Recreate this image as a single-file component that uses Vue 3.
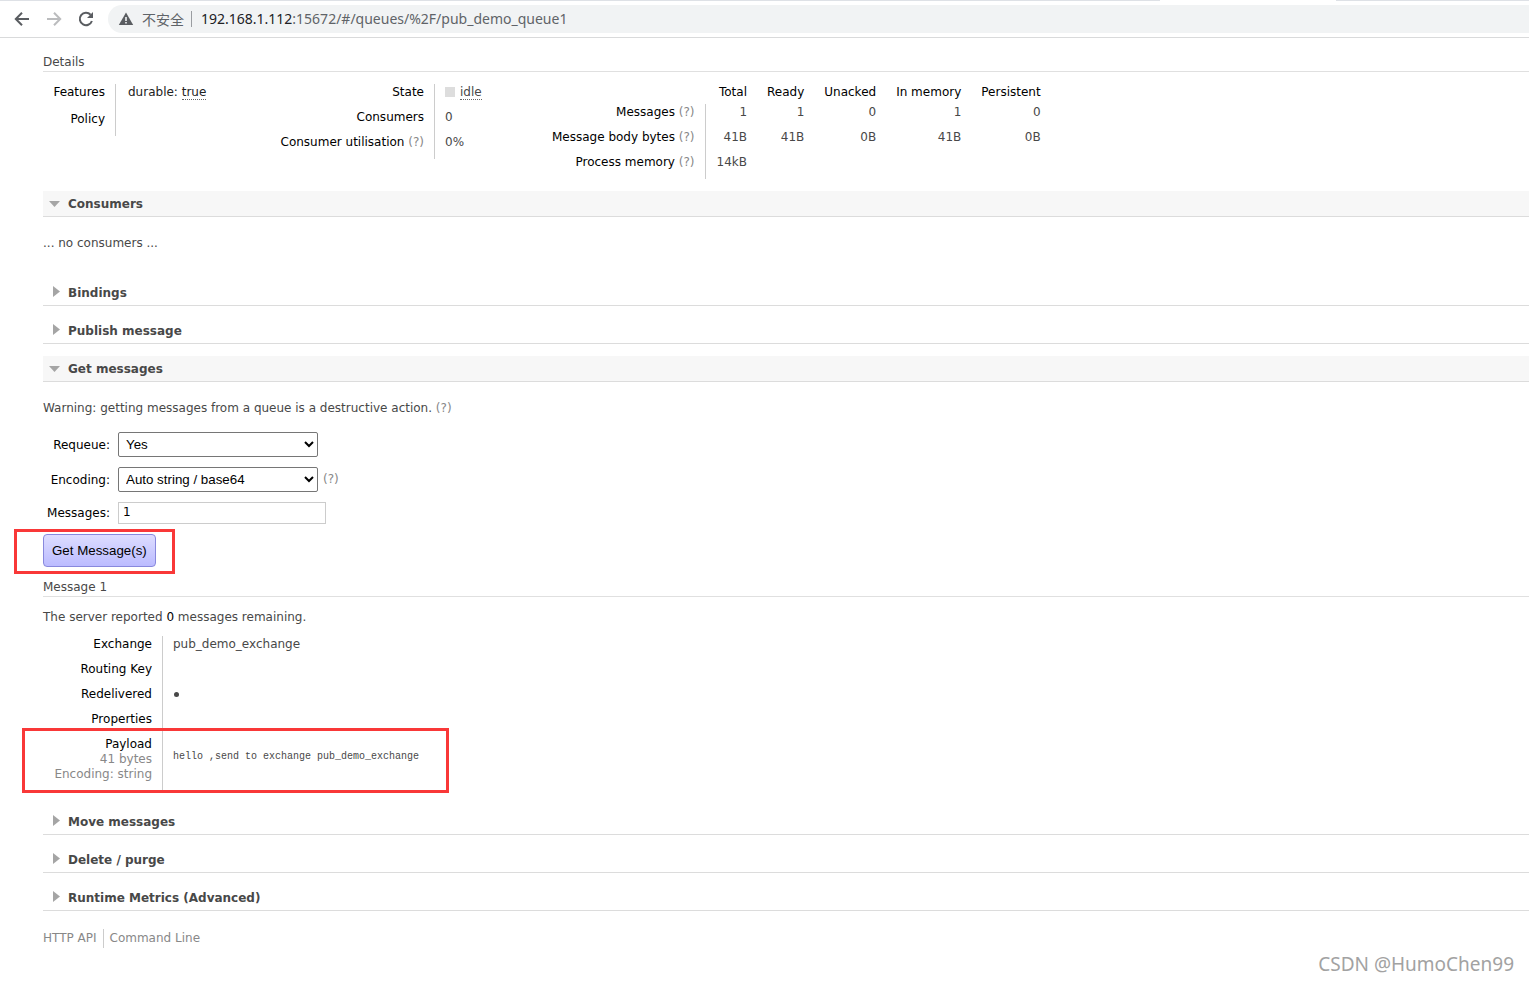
<script setup>
import { ref } from 'vue'

const requeue = ref('Yes')
const encoding = ref('Auto string / base64')
const count = ref('1')

const statColumns = ['Total', 'Ready', 'Unacked', 'In memory', 'Persistent']
const statRows = [
  { label: 'Messages', values: ['1', '1', '0', '1', '0'] },
  { label: 'Message body bytes', values: ['41B', '41B', '0B', '41B', '0B'] },
  { label: 'Process memory', values: ['14kB', '', '', '', ''] },
]
</script>

<template>
  <div class="window">
    <header class="toolbar">
      <div class="tab-strip"><span></span><span></span></div>
      <div class="toolbar-row">
        <button class="nav" aria-label="Back">
          <svg width="16" height="16" viewBox="0 0 16 16"><path d="M15 8H2.5M8 1.8L1.8 8L8 14.2" fill="none" stroke="#5a5d61" stroke-width="2" /></svg>
        </button>
        <button class="nav" aria-label="Forward">
          <svg width="16" height="16" viewBox="0 0 16 16"><path d="M1 8H13.5M8 1.8L14.2 8L8 14.2" fill="none" stroke="#bbbcbe" stroke-width="2" /></svg>
        </button>
        <button class="nav" aria-label="Reload">
          <svg width="16" height="16" viewBox="0 0 16 16"><path d="M13.9 10A6.2 6.2 0 1 1 12.6 3.8" fill="none" stroke="#5a5d61" stroke-width="2" /><path d="M15 1V7H9Z" fill="#5a5d61" /></svg>
        </button>
        <div class="omnibox">
          <svg width="16" height="14" viewBox="0 0 16 14"><path d="M8 0.5L15.2 13H0.8Z" fill="#5a5d61" /><path d="M7.2 5h1.6v4H7.2zM7.2 10h1.6v1.6H7.2z" fill="#f1f3f4" /></svg>
          <span class="insecure">不安全</span>
          <span class="url"><b>192.168.1.112</b>:15672/#/queues/%2F/pub_demo_queue1</span>
        </div>
      </div>
    </header>

    <main class="page">
      <h3>Details</h3>
      <div class="details">
        <table class="facts features">
          <tbody>
            <tr><th>Features</th><td class="dark">durable: <abbr>true</abbr></td></tr>
            <tr class="tall"><th>Policy</th><td></td></tr>
          </tbody>
        </table>
        <table class="facts state">
          <tbody>
            <tr><th>State</th><td><span class="square"></span><abbr>idle</abbr></td></tr>
            <tr><th>Consumers</th><td>0</td></tr>
            <tr><th>Consumer utilisation <span class="help">(?)</span></th><td>0%</td></tr>
          </tbody>
        </table>
        <table class="facts stats">
          <thead>
            <tr><td></td><th v-for="c in statColumns" :key="c">{{ c }}</th></tr>
          </thead>
          <tbody>
            <tr v-for="row in statRows" :key="row.label">
              <th>{{ row.label }} <span class="help">(?)</span></th>
              <td v-for="(v, i) in row.values" :key="i">{{ v }}</td>
            </tr>
          </tbody>
        </table>
      </div>

      <h2 class="open"><svg width="11" height="6"><path d="M0 0H11L5.5 6Z" /></svg>Consumers</h2>
      <p class="empty">... no consumers ...</p>
      <h2><svg width="7" height="11"><path d="M0 0V11L7 5.5Z" /></svg>Bindings</h2>
      <h2><svg width="7" height="11"><path d="M0 0V11L7 5.5Z" /></svg>Publish message</h2>
      <h2 class="open"><svg width="11" height="6"><path d="M0 0H11L5.5 6Z" /></svg>Get messages</h2>

      <p class="warning">Warning: getting messages from a queue is a destructive action. <span class="help">(?)</span></p>
      <form class="get-form" @submit.prevent>
        <label for="requeue">Requeue:</label>
        <div class="field">
          <select id="requeue" v-model="requeue"><option>Yes</option><option>No</option></select>
        </div>
        <label for="encoding">Encoding:</label>
        <div class="field">
          <select id="encoding" v-model="encoding"><option>Auto string / base64</option><option>base64</option></select>
          <span class="help">(?)</span>
        </div>
        <label for="count">Messages:</label>
        <div class="field"><input id="count" v-model="count" type="text" /></div>
        <div class="submit marked"><button type="submit">Get Message(s)</button></div>
      </form>

      <h3>Message 1</h3>
      <p class="remaining">The server reported <b>0</b> messages remaining.</p>
      <div class="message marked">
        <table class="facts">
          <tbody>
            <tr><th>Exchange</th><td>pub_demo_exchange</td></tr>
            <tr><th>Routing Key</th><td></td></tr>
            <tr><th>Redelivered</th><td><span class="dot"></span></td></tr>
            <tr><th>Properties</th><td></td></tr>
            <tr class="payload">
              <th>Payload<div class="sub">41 bytes</div><div class="sub">Encoding: string</div></th>
              <td><pre>hello ,send to exchange pub_demo_exchange</pre></td>
            </tr>
          </tbody>
        </table>
      </div>

      <h2><svg width="7" height="11"><path d="M0 0V11L7 5.5Z" /></svg>Move messages</h2>
      <h2><svg width="7" height="11"><path d="M0 0V11L7 5.5Z" /></svg>Delete / purge</h2>
      <h2><svg width="7" height="11"><path d="M0 0V11L7 5.5Z" /></svg>Runtime Metrics (Advanced)</h2>

      <footer><a href="#api">HTTP API</a><a href="#cli">Command Line</a></footer>
    </main>
    <div class="watermark">CSDN @HumoChen99</div>
  </div>
</template>

<style>
body { margin: 0; background: #fff; }
</style>

<style scoped>
.window {
  position: relative;
  min-height: 100vh;
  overflow: hidden;
  color: #484848;
  font: 12px/15px Verdana, "DejaVu Sans", sans-serif;
}
.toolbar { border-bottom: 1px solid #d9dadb; }
.tab-strip { display: flex; justify-content: space-between; height: 1px; }
.tab-strip span { background: #dee1e6; flex: 1160; }
.tab-strip span:last-child { flex: 193; margin-left: 176px; }
.toolbar-row { display: flex; align-items: center; height: 36px; padding-left: 14px; }
.nav { width: 16px; height: 16px; margin-right: 16px; padding: 0; border: 0; background: none; }
.nav svg { display: block; }
.omnibox {
  display: flex;
  flex: 1;
  align-items: center;
  height: 28px;
  margin-left: -2px;
  padding-left: 10px;
  border-radius: 14px 0 0 14px;
  background: #f1f3f4;
  color: #5f6368;
  font: 14px/20px "Noto Sans", "Noto Sans CJK SC", sans-serif;
}
.insecure { margin-left: 8px; padding-right: 7px; border-right: 1px solid #9a9da1; line-height: 16px; font-family: "Noto Sans CJK SC", sans-serif; }
.url { margin-left: 9px; }
.url b { color: #202124; font-weight: 400; }

.page { padding: 17px 0 0 43px; }
h3 { margin: 0; padding-bottom: 1px; border-bottom: 1px solid #e0e0e0; font-size: 12px; font-weight: 400; line-height: 15px; }
h2 {
  display: flex;
  align-items: center;
  height: 23px;
  margin: 0 0 12px;
  padding: 2px 0 0 10px;
  border-bottom: 1px solid #dcdcdc;
  font-size: 12px;
  font-weight: 700;
}
h2.open { padding-left: 6px; background: #f7f7f7; }
h2 svg { margin: 0 8px 4px 0; fill: #a5a5a5; }
h2.open svg { margin-bottom: 2px; }
p { margin: 0; }
.help { color: #888; }
abbr { border-bottom: 1px dotted #666; }

.details { display: flex; align-items: flex-start; margin: 12px 0; }
.facts { border-collapse: collapse; }
.facts th, .facts td { height: 15px; padding: 1px 10px 9px; vertical-align: top; }
.facts tbody th { border-right: 1px solid #ccc; color: #000; font-weight: 400; text-align: right; }
.facts .tall th { padding-top: 3px; }
.features { width: 226px; }
.features th { width: 52px; }
.features .dark { padding-left: 12px; color: #222; }
.state { width: 263px; }
.state th { width: 145px; }
.square { display: inline-block; width: 10px; height: 10px; margin-right: 5px; background: #ddd; vertical-align: -1px; }
.stats { margin-left: 10px; }
.stats thead th { min-width: 32px; padding-bottom: 4px; color: #000; font-weight: 400; text-align: right; }
.stats thead td { padding-bottom: 4px; }
.stats td { text-align: right; }

.empty { margin: 19px 0 29px; }
.warning { margin: 19px 0 16px; }
.get-form { display: grid; grid-template-columns: 67px 1fr; row-gap: 10px; column-gap: 8px; align-items: center; margin-bottom: 11px; color: #000; }
.get-form label { padding-top: 1px; text-align: right; }
.field { display: flex; align-items: center; gap: 5px; }
select, button { font-family: "Liberation Sans", Arial, sans-serif; }
select { box-sizing: border-box; width: 200px; height: 25px; padding: 0 3px; border: 1px solid #767676; border-radius: 2px; background: #fff; color: #000; }
.get-form input { box-sizing: border-box; width: 208px; height: 22px; padding: 0 4px 2px; border: 1px solid #ccc; background: #fff; color: #000; font: 12px Verdana, "DejaVu Sans", sans-serif; }
.submit { grid-column: 1 / -1; justify-self: start; }
.submit button {
  display: block;
  height: 33px;
  padding: 0 8px;
  border: 1px solid #8888dd;
  border-radius: 4px;
  background: linear-gradient(#ddf, #bbf);
  color: #000;
}
.marked { position: relative; }
.marked::after { content: ""; position: absolute; border: 3px solid #f93838; pointer-events: none; }
.submit::after { inset: -5px -19px -7px -29px; }
.get-form + h3 { padding-top: 2px; }
.remaining { margin: 13px 0 11px; }
.remaining b { color: #000; font-weight: 400; }
.message { width: fit-content; margin-bottom: 19px; }
.message::after { left: -21px; right: -20px; bottom: -3px; height: 59px; }
.message th { width: 99px; }
.message .payload th { padding-bottom: 8px; }
.sub { color: #888; }
.dot { display: block; width: 5px; height: 5px; margin: 5px 1px; border-radius: 50%; background: #484848; }
pre { margin: 12px 0 0; font: 10px/15px "Liberation Mono", monospace; }

footer { display: flex; padding-top: 6px; }
footer a { color: #888; line-height: 19px; text-decoration: none; }
footer a + a { margin-left: 6px; padding-left: 6px; border-left: 1px solid #ccc; }
.watermark { position: absolute; right: 15px; bottom: 5px; color: #a2a2a2; font: 19px/26px "Noto Sans", sans-serif; }
</style>
